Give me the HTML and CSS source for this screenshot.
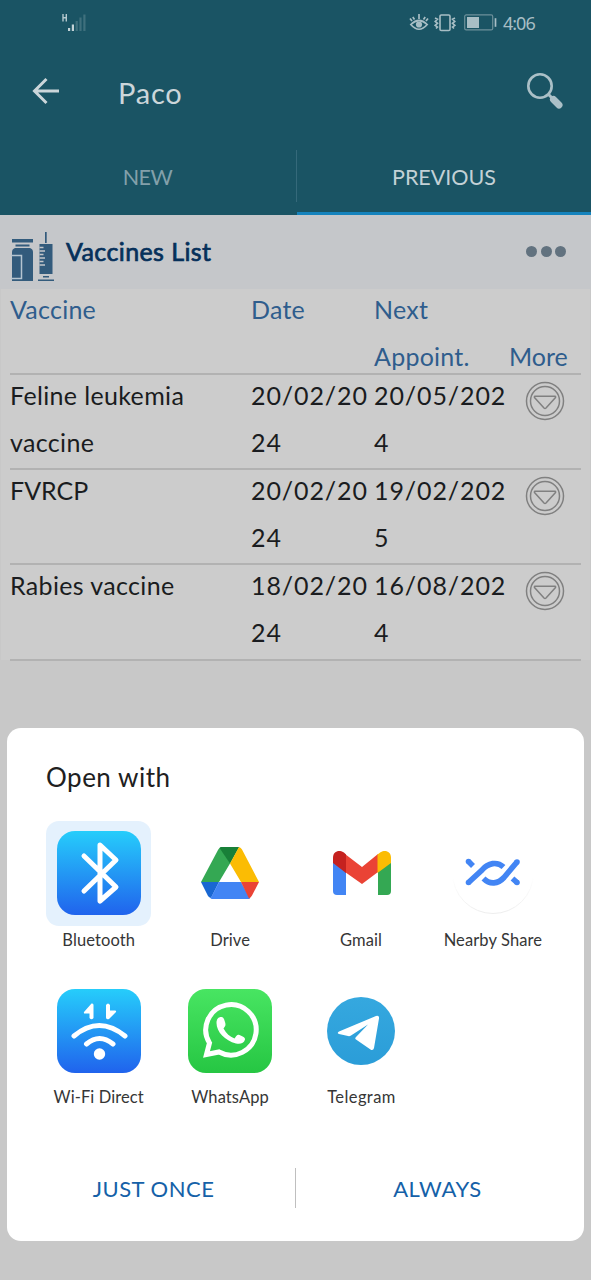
FILE: index.html
```html
<!DOCTYPE html>
<html lang="en">
<head>
<meta charset="utf-8">
<title>Paco</title>
<link rel="stylesheet" href="styles.css">
</head>
<body>
<div class="screen">
  <header class="top">
    <div class="status">
      <svg class="signal" width="26" height="20" viewBox="0 0 26 20">
        <path d="M2 1v7.500M5.300 1v7.500M2 4.700h3.300" stroke="#b4c8ce" stroke-width="1.400" fill="none"/>
        <path d="M7 15h2.200v3H7zM10.800 11.500h2.200V18h-2.200z" fill="#c3d3d7"/>
        <path d="M14.600 8h2.200v10h-2.200zM18.400 4.500h2.200V18h-2.200zM22.300 1.500h2.200V18h-2.200z" fill="#3f707d"/>
      </svg>
      <div class="status-right">
        <svg class="eye" width="20" height="18" viewBox="0 0 20 18" fill="none" stroke="#a8bec5" stroke-width="1.700">
          <path d="M1.800 10.500Q10 2.500 18.200 10.500Q10 20 1.800 10.500zM10 0v5M3.800 3l1.700 2.500M16.200 3l-1.700 2.500M1 4.500l2 2.500M19 4.500L17 7"/>
          <circle cx="10" cy="10.500" r="3.100" fill="#a8bec5" stroke="none"/>
        </svg>
        <svg class="vibrate" width="22" height="18" viewBox="0 0 22 18" fill="none" stroke="#a8bec5" stroke-width="1.600">
          <rect x="6" y="1" width="10" height="15.500" rx="1.300"/>
          <path d="M1 4l2.500 1.300L1.200 7.500l2.300 1.800-2.300 2L3.500 13l-1.500 1.500M21 4l-2.500 1.300 2.300 2.200-2.300 1.800 2.300 2-2.300 1.700 1.500 1.500"/>
        </svg>
        <svg class="battery" width="33" height="17" viewBox="0 0 33 17">
          <rect x=".7" y=".9" width="28" height="15" rx="1.500" fill="none" stroke="#6d909a" stroke-width="1.200"/>
          <rect x="3" y="3" width="12" height="11" fill="#a8bec5"/>
          <path d="M31.500 4.200v8.600" stroke="#a8bec5" stroke-width="1.700"/>
        </svg>
        <span class="clock">4:06</span>
      </div>
    </div>
    <div class="appbar">
      <svg class="back" width="28" height="28" viewBox="0 0 28 28" fill="none" stroke="#cbd6da" stroke-width="3"><path d="M27 14H3M14.500 2L2.500 14l12 12"/></svg>
      <h1 class="title">Paco</h1>
      <svg class="search" width="38" height="38" viewBox="0 0 38 38" fill="none" stroke="#abc0c7"><circle cx="14" cy="14" r="11.700" stroke-width="2.600"/><path d="M22.300 22.300l4 4" stroke-width="3"/><path d="M27.500 27.500l5.500 5.500" stroke-width="7" stroke-linecap="round"/></svg>
    </div>
    <nav class="tabs">
      <div class="tab"><span class="t-new">NEW</span></div>
      <div class="tab active"><span class="t-prev">PREVIOUS</span></div>
    </nav>
  </header>

  <section class="list-head">
    <svg class="vial" width="44" height="50" viewBox="0 0 44 50" fill="#335b7c">
      <path d="M1 7h21v3.500H1zM4.500 12.500h14v2h-14zM4 16h15q3 1 3 4v29H1V20q0-3 3-4z"/>
      <path d="M0 23.500h10.500v23H0" fill="none" stroke="#b5c4d0" stroke-width="1.500"/>
      <path d="M34 0h1.700v11H34zM28.500 12h13v30h-13z"/>
      <path d="M28.500 15.500h4M28.500 19h5.500M28.500 22.500h4M28.500 26h5.500M28.500 29.500h4M28.500 33h5.500" stroke="#c5c7ca" stroke-width="1.300"/>
      <path d="M32 44h6v1.500h-6zM27 47.500h16V49H27z"/>
    </svg>
    <h2 class="list-title">Vaccines List</h2>
    <div class="dots"><i class="dot"></i><i class="dot"></i><i class="dot"></i></div>
  </section>

  <main class="table">
    <div class="row head">
      <div class="cell h-vac">Vaccine</div><div class="cell h-date">Date</div><div class="cell h-next">Next<br>Appoint.</div><div class="cell more">More</div>
    </div>
    <div class="row">
      <div class="cell name">Feline leukemia<br>vaccine</div><div class="cell num">20/02/20<br>24</div><div class="cell num">20/05/202<br>4</div>
      <svg class="expand" width="40" height="40" viewBox="0 0 40 40"><use href="#down"/></svg>
    </div>
    <div class="row">
      <div class="cell code">FVRCP</div><div class="cell num">20/02/20<br>24</div><div class="cell num">19/02/202<br>5</div>
      <svg class="expand" width="40" height="40" viewBox="0 0 40 40"><use href="#down"/></svg>
    </div>
    <div class="row">
      <div class="cell name">Rabies vaccine</div><div class="cell num">18/02/20<br>24</div><div class="cell num">16/08/202<br>4</div>
      <svg class="expand" width="40" height="40" viewBox="0 0 40 40"><use href="#down"/></svg>
    </div>
  </main>

  <section class="sheet">
    <h3 class="sheet-title">Open with</h3>
    <div class="apps">
      <div class="app">
        <div class="icon selected">
          <svg width="84" height="84" viewBox="0 0 84 84"><rect width="84" height="84" rx="18" fill="url(#blue)"/><path d="M27 25L59 56 43 70V14L59 29 27 60" fill="none" stroke="#fff" stroke-width="5" stroke-linecap="round" stroke-linejoin="round"/></svg>
        </div>
        <span class="label l-bt">Bluetooth</span>
      </div>
      <div class="app">
        <div class="icon">
          <svg width="58" height="52" viewBox="0 0 58 52">
            <path d="M20 0h18l-9 16.500L18 35H0L17 3q1-2 3-3z" fill="#34a853"/>
            <path d="M20 0h18l-9 16.500L18.500 1z" fill="#188038"/>
            <path d="M38 0q2 .5 3 2.500L58 35H40L29 16.500z" fill="#fbbc04"/>
            <path d="M0 35h18L10 51q-2-.5-3-2z" fill="#1967d2"/>
            <path d="M18 35h22l9 16.500q-1 .5-2 .5H11l-1.500-.5z" fill="#4285f4"/>
            <path d="M40 35h18l-7 13.500q-1 2-3 3z" fill="#ea4335"/>
          </svg>
        </div>
        <span class="label l-dr">Drive</span>
      </div>
      <div class="app">
        <div class="icon">
          <svg class="gmail" width="58" height="44" viewBox="0 0 58 44">
            <path d="M0 11l13 9v24H4q-4 0-4-4z" fill="#4285f4"/>
            <path d="M45 20l13-9v29q0 4-4 4h-9z" fill="#34a853"/>
            <path d="M12 3l17 13L45 3v18L29 33 12 21z" fill="#ea4335"/>
            <path d="M0 12V6.500C0 0 7-2 11.500 2L13 3.500V22z" fill="#c5221f"/>
            <path d="M58 12V6.500C58 0 51-2 46.500 2L44.500 3.500V22z" fill="#fbbc04"/>
          </svg>
        </div>
        <span class="label l-gm">Gmail</span>
      </div>
      <div class="app">
        <div class="icon">
          <svg width="84" height="84" viewBox="0 0 84 84">
            <defs><linearGradient id="rim" x1="0" y1="0" x2="0" y2="1"><stop offset=".55" stop-color="#fff"/><stop offset="1" stop-color="#ededed"/></linearGradient></defs>
            <circle cx="42" cy="42" r="40.500" fill="#fff" stroke="url(#rim)"/>
            <path d="M17.500 30.500l4.500 4.500M17.500 51.500L31 39C37 32 46 30 52.500 36M32.500 47.500C39 54 47 53 53 46.500L66 31M61.500 47.500l4.500 4" fill="none" stroke="#4285f4" stroke-width="5.600"/>
            <g fill="#4285f4"><circle cx="17.500" cy="30.500" r="2.800"/><circle cx="17.500" cy="51.500" r="2.800"/><circle cx="66" cy="31" r="2.800"/><circle cx="66" cy="51.500" r="2.800"/></g>
          </svg>
        </div>
        <span class="label l-ns">Nearby Share</span>
      </div>
      <div class="app">
        <div class="icon">
          <svg width="84" height="84" viewBox="0 0 84 84"><rect width="84" height="84" rx="18" fill="url(#blue)"/>
            <path d="M17 47Q42 26 68 47M29.500 55Q42.500 44 56 55" fill="none" stroke="#fff" stroke-width="5" stroke-linecap="round"/><circle cx="42.500" cy="65" r="5.700" fill="#fff"/>
            <path d="M36.500 16q0-2-2-1.500L27 23q-.5 1.500 1 1.500h4.500V29q2 2.500 4 0zM49 16q2-3 4 0v5.500h5q1.500 0 1 1.500l-7 7q-3 1-3-1.500z" fill="#fff"/></svg>
        </div>
        <span class="label l-wf">Wi-Fi Direct</span>
      </div>
      <div class="app">
        <div class="icon">
          <svg width="84" height="84" viewBox="0 0 84 84"><rect width="84" height="84" rx="18" fill="url(#green)"/>
            <path d="M18.500 65.500L21.500 54A25.200 25.200 0 1 1 31 63z" fill="none" stroke="#fff" stroke-width="5" stroke-linejoin="miter"/>
            <path d="M33 28c2 0 3 1 4 5c1 3 .5 4-1.500 6.500c3 5 6 8 11 10c2-3 3-4.500 5-3.500c3 1.500 6 2.500 5.500 4.500c-1 4-5 5-9 4C37 51.500 28.500 43 28.500 34c0-4 2-6 4.500-6z" fill="#fff"/></svg>
        </div>
        <span class="label l-wa">WhatsApp</span>
      </div>
      <div class="app">
        <div class="icon">
          <svg width="68" height="68" viewBox="0 0 68 68"><circle cx="34" cy="34" r="34" fill="url(#sky)"/>
            <path d="M12 34.500L49 19q3.500-1 3 2.500L47 51q-.8 3-3.500 1.500L29 42.500q-1.500-1 0-2.500L41 27.500 24 38.500q-1.500 1-3 .5l-9-2q-2.500-1 0-2.500z" fill="#fff"/></svg>
        </div>
        <span class="label l-tg">Telegram</span>
      </div>
    </div>
    <div class="actions">
      <button class="action once"><span class="t-once">JUST ONCE</span></button>
      <button class="action always"><span class="t-always">ALWAYS</span></button>
    </div>
  </section>
</div>
<svg class="defs" width="0" height="0">
  <defs>
    <linearGradient id="blue" x1="0" y1="0" x2="0" y2="1"><stop offset="0" stop-color="#26cdfb"/><stop offset="1" stop-color="#2063ed"/></linearGradient>
    <linearGradient id="green" x1="0" y1="0" x2="0" y2="1"><stop offset="0" stop-color="#48e562"/><stop offset="1" stop-color="#26c643"/></linearGradient>
    <linearGradient id="sky" x1="0" y1="0" x2="0" y2="1"><stop offset="0" stop-color="#35a8df"/><stop offset="1" stop-color="#2b9dd8"/></linearGradient>
    <g id="down" fill="none" stroke="#808080" stroke-width="1.500"><circle cx="20" cy="20" r="18.500"/><circle cx="20" cy="20" r="14.500"/><path d="M10 15.300h20q1 .2.500 1.200L21 27q-1 1-2 0L9.500 16.500q-.5-1 .5-1.200z"/></g>
  </defs>
</svg>
</body>
</html>
```
FILE: styles.css
```css
* { box-sizing: border-box; }
body { margin: 0; background: #c8c8c8; font-family: Lato, "Noto Sans", sans-serif; }
h1, h2, h3 { margin: 0; font-weight: 400; white-space: nowrap; }
svg { display: block; flex: none; }
.defs { position: absolute; }
.screen { width: 591px; height: 1280px; overflow: hidden; background: #c8c8c8; }

.top { height: 215px; background: #1a5464; }
.status { height: 46px; padding: 13px 56px 0 61px; display: flex; justify-content: space-between; }
.status-right { display: flex; align-items: flex-start; height: 20px; }
.eye { margin: 1px 5px 0 0; }
.vibrate { margin: 1px 8px 0 0; }
.battery { margin: 1px 6px 0 0; }
.clock { width: 32px; font: 18px/20px "Noto Sans", sans-serif; letter-spacing: -1px; color: #a8bec5; white-space: nowrap; }
.appbar { height: 94px; padding: 0 27px 2px 32px; display: flex; align-items: center; }
.back { margin-bottom: 3px; }
.title { flex: 1; margin-left: 58px; font-size: 29px; letter-spacing: .8px; color: #cbd6da; }
.search { margin-bottom: 3px; }
.tabs { height: 75px; display: grid; grid-template-columns: 297px 1fr; }
.tab { position: relative; display: flex; align-items: center; justify-content: center; padding: 0 2px 2px 0; font-size: 21.5px; color: #83a0aa; }
.tab:first-child::after { content: ""; position: absolute; right: 0; top: 10px; width: 1px; height: 52px; background: #35697a; }
.tab.active { color: #c3d1d6; border-bottom: 3px solid #1583bd; padding: 1px 0 0; }
.t-new { letter-spacing: -.5px; }

.list-head { height: 74px; padding: 0 25px 0 10.500px; display: flex; align-items: center; background: #c5c7ca; }
.vial { margin-top: 9px; }
.list-title { flex: 1; margin: 0 0 2px 11.500px; font-size: 25px; letter-spacing: .4px; -webkit-text-stroke: .7px #06305a; color: #06305a; }
.dots { display: flex; gap: 3.500px; margin-bottom: 2px; }
.dot { width: 11px; height: 11px; border-radius: 50%; background: #62727f; }

.table { margin: 0 1px; padding: 0 9px; height: 371px; background: #ccc; }
.row { height: 95.200px; display: grid; grid-template-columns: 241px 123px 139px 1fr; border-bottom: 2px solid #b2b2b2; }
.row.head { height: 86px; color: #2f5d8d; }
.cell { margin-top: -3px; font-size: 25px; line-height: 47px; white-space: nowrap; color: #1a1c20; }
.head .cell { color: inherit; letter-spacing: .25px; }
.head .more { padding-top: 47px; margin-left: -4px; letter-spacing: 0; }
.name { letter-spacing: .35px; }
.num { letter-spacing: .9px; }
.expand { margin: 6px 0 0 12px; }

.sheet { margin: 68px 7px 0; height: 513px; border-radius: 14px; background: #fff; overflow: hidden; }
.sheet-title { padding: 32px 0 0 39px; font-size: 26px; line-height: 34px; letter-spacing: .5px; color: #202020; }
.apps { margin: 26.500px 0 0 26px; display: grid; grid-template-columns: repeat(4, 131.400px); grid-template-rows: 157.500px 157.500px; }
.app { display: flex; flex-direction: column; align-items: center; }
.icon { width: 105px; height: 105px; display: flex; align-items: center; justify-content: center; border-radius: 13px; }
.selected { background: #e4f1fd; }
.gmail { margin: 0 0 1px 2px; }
.label { margin-top: 4px; font-size: 16.500px; line-height: 20px; letter-spacing: .1px; color: #363636; white-space: nowrap; }
.l-gm { margin-left: -1px; }
.l-tg { letter-spacing: .4px; }
.actions { height: 40px; margin-top: 32.500px; display: grid; grid-template-columns: 289px 1fr; }
.action { border: 0; padding: 2px 0 0; background: none; font: 22px/30px Lato, sans-serif; color: #1561a8; }
.once { border-right: 1px solid #bfbfbf; padding-left: 5px; letter-spacing: .5px; }
.always { padding-right: 5px; letter-spacing: .6px; }
```
